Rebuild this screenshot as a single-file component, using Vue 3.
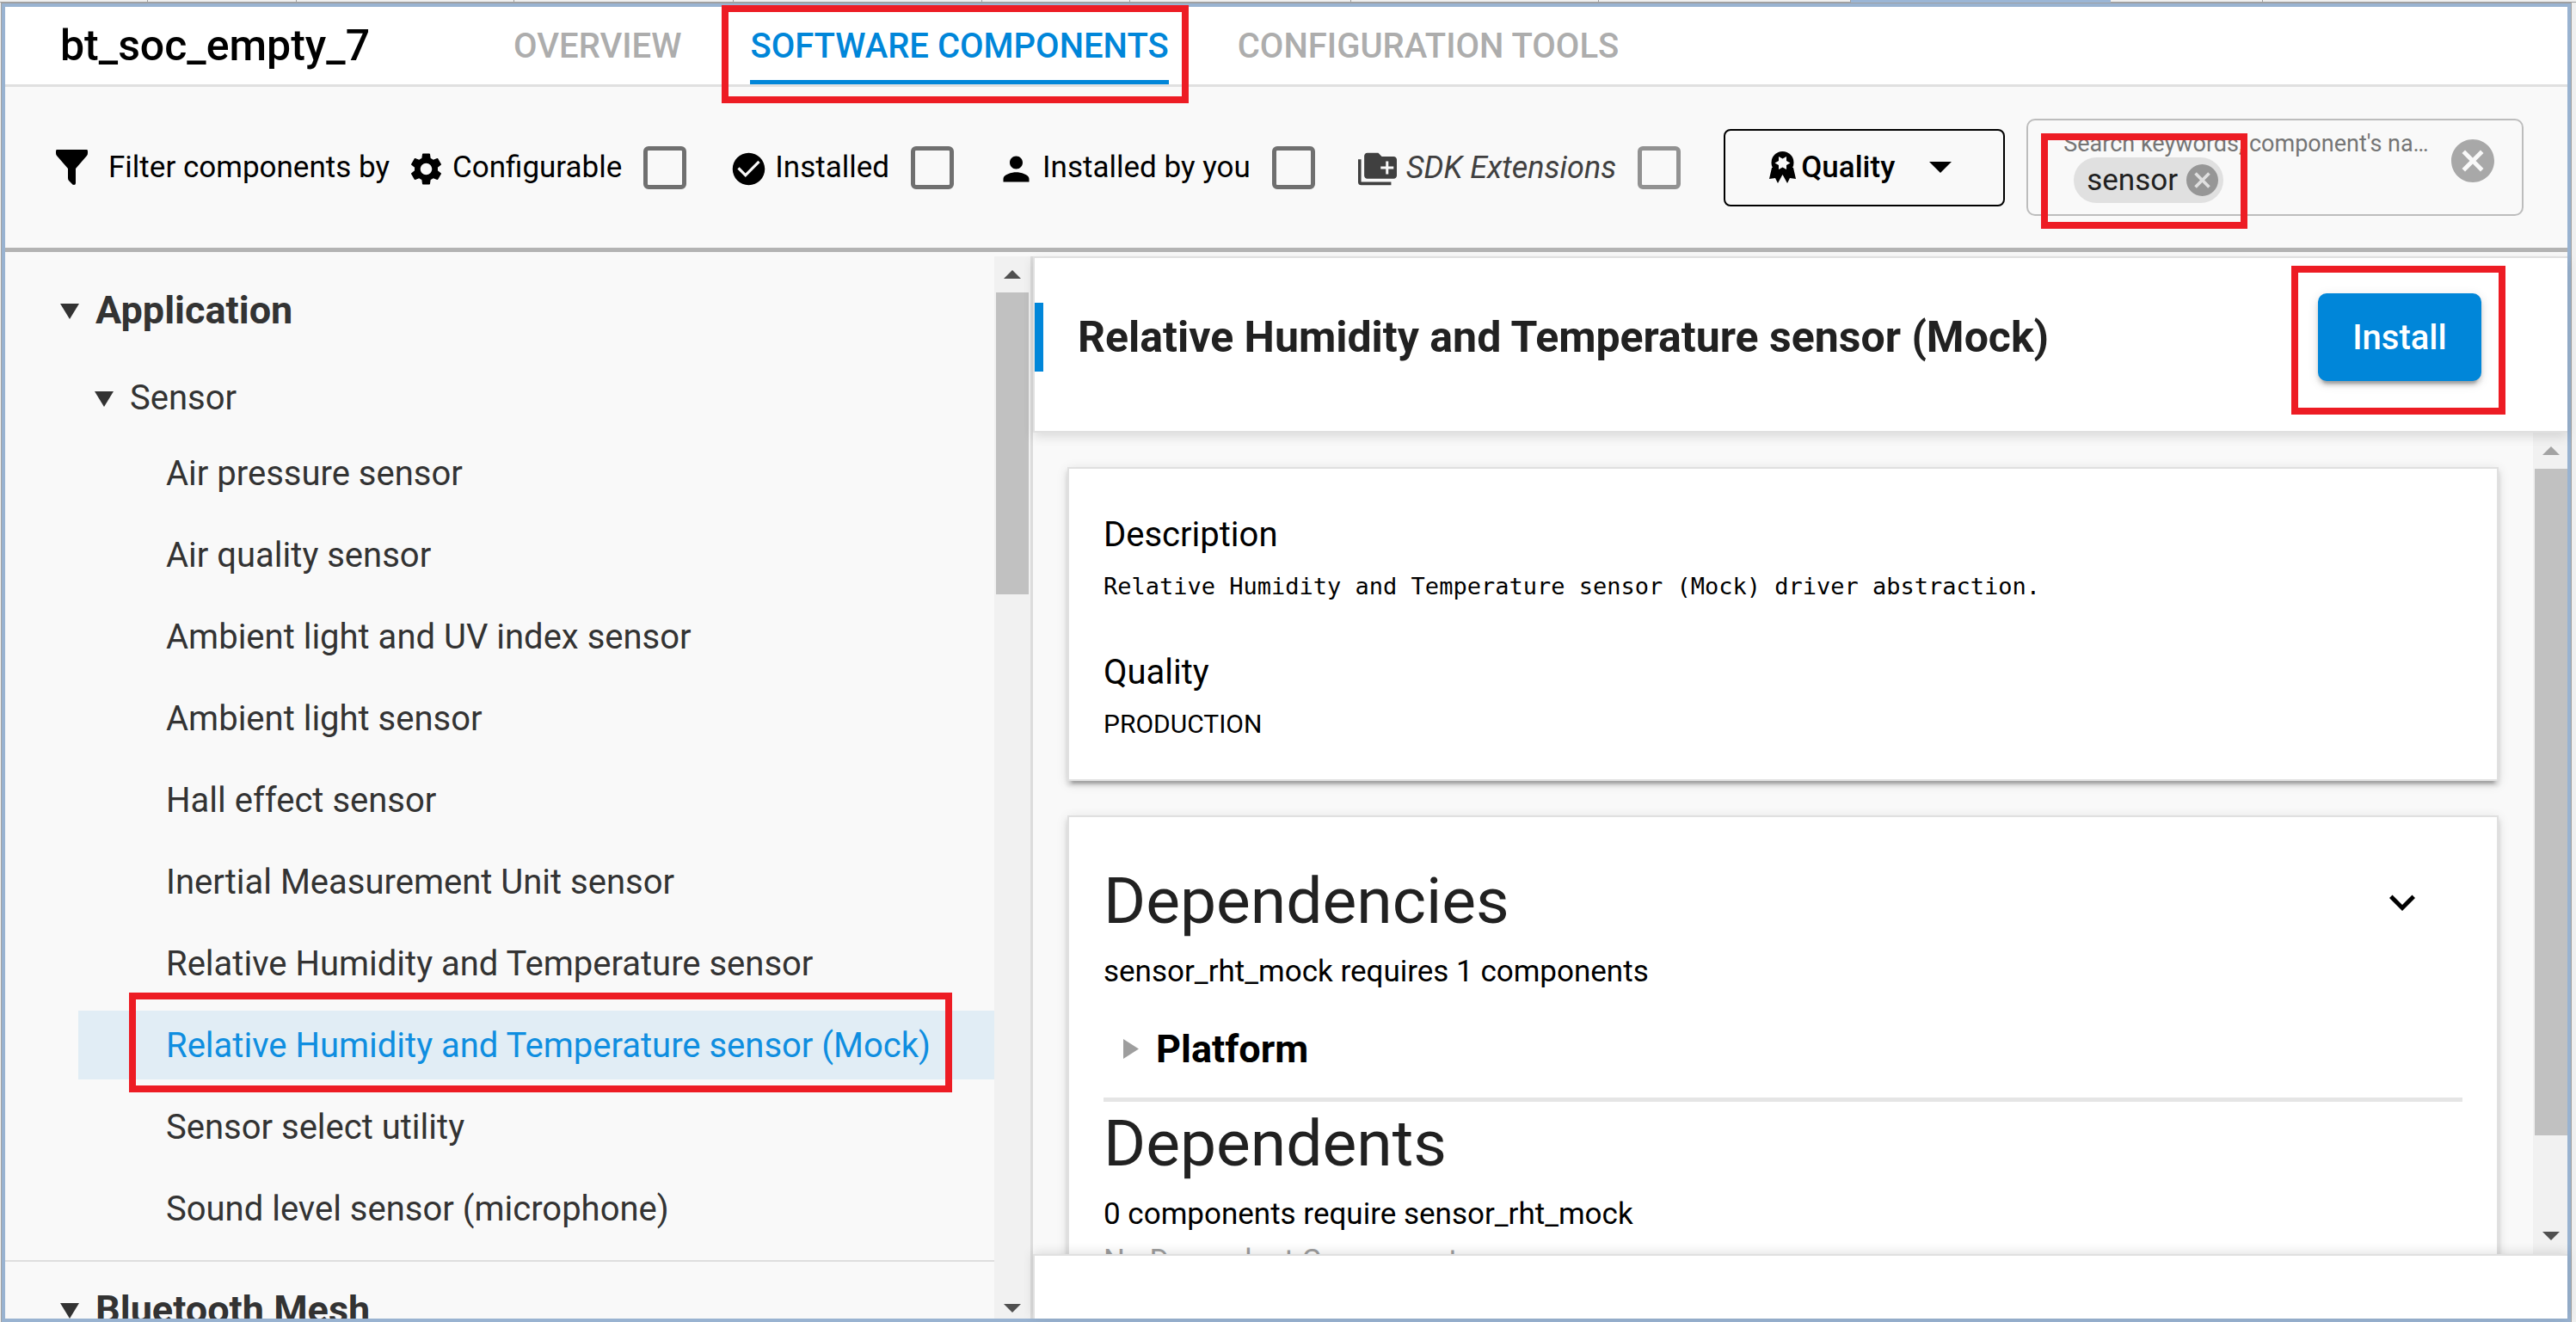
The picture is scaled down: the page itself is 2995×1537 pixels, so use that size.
<script setup>
import { ref } from 'vue'

const editorTabs = [172, 172, 253, 255, 289, 171, 257, 288, 293]

const navItems = ['OVERVIEW', 'SOFTWARE COMPONENTS', 'CONFIGURATION TOOLS']
const activeNav = 'SOFTWARE COMPONENTS'

const filters = [
  { id: 'configurable', label: 'Configurable', icon: 'gear' },
  { id: 'installed', label: 'Installed', icon: 'check' },
  { id: 'by-you', label: 'Installed by you', icon: 'person' },
  { id: 'sdk', label: 'SDK Extensions', icon: 'folder', muted: true }
]

const icons = {
  gear: 'M19.14 12.94c.04-.3.06-.61.06-.94 0-.32-.02-.64-.07-.94l2.03-1.58c.18-.14.23-.41.12-.61l-1.92-3.32c-.12-.22-.37-.29-.59-.22l-2.39.96c-.5-.38-1.03-.7-1.62-.94l-.36-2.54c-.04-.24-.24-.41-.48-.41h-3.84c-.24 0-.43.17-.47.41l-.36 2.54c-.59.24-1.13.57-1.62.94l-2.39-.96c-.22-.08-.47 0-.59.22L2.74 8.87c-.12.21-.08.47.12.61l2.03 1.58c-.05.3-.09.63-.09.94s.02.64.07.94l-2.03 1.58c-.18.14-.23.41-.12.61l1.92 3.32c.12.22.37.29.59.22l2.39-.96c.5.38 1.03.7 1.62.94l.36 2.54c.05.24.24.41.48.41h3.84c.24 0 .44-.17.47-.41l.36-2.54c.59-.24 1.13-.56 1.62-.94l2.39.96c.22.08.47 0 .59-.22l1.92-3.32c.12-.22.07-.47-.12-.61l-2.01-1.58zM12 15.6c-1.98 0-3.6-1.62-3.6-3.6s1.62-3.6 3.6-3.6 3.6 1.62 3.6 3.6-1.62 3.6-3.6 3.6z',
  check: 'M12 2C6.48 2 2 6.48 2 12s4.48 10 10 10 10-4.48 10-10S17.52 2 12 2zm-2 15l-5-5 1.2-1.2L10 14.6l7.8-7.8L19 8l-9 9z',
  person: 'M12 12c2.21 0 4-1.79 4-4s-1.79-4-4-4-4 1.79-4 4 1.79 4 4 4zm0 2c-2.67 0-8 1.34-8 4v2h16v-2c0-2.66-5.33-4-8-4z',
  folder: 'M0 6h1.900v14h18.600v2H1.900C.8 22 0 21.200 0 20.200zM5.700 2h6.800l2.200 2.200h7.300c1.100 0 2 .8 2 1.900v10c0 1-.9 1.900-2 1.900H5.700c-1 0-1.900-.9-1.900-1.900V3.900C3.800 2.900 4.700 2 5.700 2zM17.200 7.200v3.200H14V12h3.200v3.200h1.600V12H22v-1.600h-3.200V7.200z',
  cancel: 'M12 2C6.470 2 2 6.470 2 12s4.470 10 10 10 10-4.470 10-10S17.530 2 12 2zm5 13.590L15.590 17 12 13.410 8.410 17 7 15.590 10.590 12 7 8.410 8.410 7 12 10.590 15.590 7 17 8.410 13.410 12z'
}

const components = [
  'Air pressure sensor',
  'Air quality sensor',
  'Ambient light and UV index sensor',
  'Ambient light sensor',
  'Hall effect sensor',
  'Inertial Measurement Unit sensor',
  'Relative Humidity and Temperature sensor',
  'Relative Humidity and Temperature sensor (Mock)',
  'Sensor select utility',
  'Sound level sensor (microphone)'
]
const selected = ref('Relative Humidity and Temperature sensor (Mock)')
const query = ref('')
</script>

<template>
  <div class="app">
    <div class="editor-tabs" aria-hidden="true">
      <span v-for="(w, i) in editorTabs" :key="i" class="editor-tab" :style="{ flexGrow: w }"></span>
      <span class="editor-tab current"></span>
      <span class="editor-tab after"></span>
      <span class="editor-tab last"></span>
    </div>

    <div class="window">
      <header class="topbar">
        <h1>bt_soc_empty_7</h1>
        <nav>
          <a v-for="item in navItems" :key="item" href="#" :class="{ active: item === activeNav, marked: item === activeNav }">{{ item }}</a>
        </nav>
      </header>

      <section class="filterbar">
        <svg class="funnel" viewBox="0 0 37 41" aria-hidden="true">
          <path d="M1 0h35q1 0 1 2v2q0 2-1 3L23 22v17q0 2-2 2-2 0-3-2l-3-3q-1-1-1-3V22L1 7Q0 6 0 4V2q0-2 1-2z" />
        </svg>
        <span class="filter-title">Filter components by</span>

        <div class="filters">
          <div v-for="f in filters" :key="f.id" class="filter" :class="{ muted: f.muted }">
            <label :for="f.id">
              <svg class="icon" viewBox="0 0 24 24" aria-hidden="true"><path fill-rule="evenodd" :d="icons[f.icon]" /></svg>
              <span>{{ f.label }}</span>
            </label>
            <input :id="f.id" type="checkbox" />
          </div>
        </div>

        <label class="quality">
          <svg class="ribbon" viewBox="0 0 31 37" aria-hidden="true">
            <path d="M3 19L0 32l7-1 3 6 5.500-10L21 37l3-6 7 1-3-13z" />
            <circle cx="15.500" cy="13" r="13" />
            <path class="star" d="M24.500 13.500L20 16l0 5-4.500-2.500L11 21v-5l-4.500-2.500L11 11V6l4.500 2.500L20 6v5z" />
          </svg>
          <select aria-label="Quality">
            <option>Quality</option>
          </select>
          <svg class="caret" viewBox="0 0 26 13" aria-hidden="true"><path d="M0 0h26L13 13z" /></svg>
        </label>

        <div class="search">
          <div class="search-body">
            <label for="search">Search keywords, component's na…</label>
            <div class="chips">
              <span class="chip marked">
                sensor
                <button type="button" aria-label="Remove sensor">
                  <svg viewBox="2 2 20 20"><path :d="icons.cancel" /></svg>
                </button>
              </span>
              <input id="search" v-model="query" type="text" />
            </div>
          </div>
          <button type="button" class="clear" aria-label="Clear search">
            <svg viewBox="2 2 20 20"><path :d="icons.cancel" /></svg>
          </button>
        </div>
      </section>

      <main class="content">
        <aside class="sidebar">
          <div class="tree">
            <section class="group">
              <button type="button" class="group-head">
                <svg class="tri" viewBox="0 0 22 18" aria-hidden="true"><path d="M0 0h22L11 18z" /></svg>Application
              </button>
              <button type="button" class="sub-head">
                <svg class="tri" viewBox="0 0 22 18" aria-hidden="true"><path d="M0 0h22L11 18z" /></svg>Sensor
              </button>
              <ul>
                <li v-for="c in components" :key="c">
                  <button type="button" :class="{ selected: c === selected, marked: c === selected }" @click="selected = c">{{ c }}</button>
                </li>
              </ul>
            </section>
            <section class="group">
              <button type="button" class="group-head">
                <svg class="tri" viewBox="0 0 22 18" aria-hidden="true"><path d="M0 0h22L11 18z" /></svg>Bluetooth Mesh
              </button>
            </section>
          </div>
          <div class="scrollbar tree-scroll" aria-hidden="true">
            <div class="arrow"><svg viewBox="0 0 22 11"><path d="M11 0l11 11H0z" /></svg></div>
            <div class="track"><div class="thumb"></div></div>
            <div class="arrow short"><svg viewBox="0 0 22 11"><path d="M0 0h22L11 11z" /></svg></div>
          </div>
        </aside>

        <section class="detail">
          <header class="detail-head">
            <h2>{{ selected }}</h2>
            <button type="button" class="install marked">Install</button>
          </header>

          <div class="detail-body">
            <div class="cards">
              <article class="card">
                <h3>Description</h3>
                <p class="mono">Relative Humidity and Temperature sensor (Mock) driver abstraction.</p>
                <h3 class="spaced">Quality</h3>
                <p class="small">PRODUCTION</p>
              </article>

              <article class="card deps">
                <div class="deps-head">
                  <h4>Dependencies</h4>
                  <button type="button" aria-label="Collapse">
                    <svg viewBox="0 0 24 24"><path d="M16.590 8.590L12 13.170 7.410 8.590 6 10l6 6 6-6z" /></svg>
                  </button>
                </div>
                <p>sensor_rht_mock requires 1 components</p>
                <button type="button" class="platform">
                  <svg viewBox="0 0 18 23" aria-hidden="true"><path d="M0 0l18 11.500L0 23z" /></svg>Platform
                </button>
                <hr />
                <h4>Dependents</h4>
                <p>0 components require sensor_rht_mock</p>
                <p class="none">No Dependent Components</p>
              </article>
            </div>
            <div class="scrollbar detail-scroll" aria-hidden="true">
              <div class="arrow off"><svg viewBox="0 0 22 11"><path d="M11 0l11 11H0z" /></svg></div>
              <div class="track"><div class="thumb"></div></div>
              <div class="arrow"><svg viewBox="0 0 22 11"><path d="M0 0h22L11 11z" /></svg></div>
            </div>
          </div>

          <footer class="detail-foot"></footer>
        </section>
      </main>
    </div>
  </div>
</template>

<style>
html,
body {
  margin: 0;
  overflow: hidden;
}
</style>

<style scoped>
* {
  box-sizing: border-box;
}
.app {
  display: flex;
  flex-direction: column;
  height: 100vh;
  background: #f0f0f0;
  color: #000;
  font-family: Roboto, sans-serif;
  font-size: 35px;
}
h1, h2, h3, h4, p, ul {
  margin: 0;
  padding: 0;
  font-weight: 400;
}
button, input, select {
  margin: 0;
  padding: 0;
  border: 0;
  background: none;
  color: inherit;
  font: inherit;
}
svg {
  display: block;
  flex: none;
  fill: currentColor;
}

/* Strip of editor tabs peeking in above the window */
.editor-tabs {
  display: flex;
  height: 4px;
}
.editor-tab {
  flex: 1 1 0;
  height: 3px;
  border-right: 1px solid #a0a0a0;
  border-bottom: 1px solid #a0a0a0;
}
.editor-tab.current {
  flex-grow: 303;
  height: 4px;
  border: 0;
  background: #9bb6d6;
}
.editor-tab.after {
  flex-grow: 177;
}
.editor-tab.last {
  flex-grow: 365;
  border-right: 0;
}

.window {
  display: flex;
  flex: 1;
  flex-direction: column;
  min-height: 0;
  margin: 0 6px 0 2px;
  border: 4px solid #99b3d1;
  background: #f9f9f9;
  box-shadow: 0 0 0 1px #a0a0a0;
}

/* Red call-out frames */
.marked {
  position: relative;
}
.marked::after {
  position: absolute;
  z-index: 5;
  border: 8px solid #ed1c24;
  content: '';
  pointer-events: none;
}

.topbar {
  display: flex;
  flex: none;
  align-items: stretch;
  height: 93px;
  padding-left: 64px;
  border-bottom: 3px solid #e0e0e0;
  background: #fff;
}
h1 {
  font-size: 50px;
  font-weight: 500;
  line-height: 90px;
}
nav {
  display: flex;
  gap: 80px;
  margin-left: 167px;
}
nav a {
  height: 90px;
  color: #adadad;
  font-size: 40px;
  font-weight: 500;
  line-height: 92px;
  text-decoration: none;
}
nav a.active {
  color: #0086d9;
  box-shadow: inset 0 -5px #0086d9;
}
nav a.marked::after {
  inset: -2px -23px -22px -33px;
}

.filterbar {
  display: flex;
  flex: none;
  align-items: center;
  height: 192px;
  padding: 0 51px 0 59px;
  border-bottom: 5px solid #b3b3b3;
}
.funnel {
  width: 37px;
  height: 41px;
}
.filter-title {
  margin: 0 20px 0 24px;
  white-space: nowrap;
}
.filters {
  display: flex;
  gap: 50px;
}
.filter,
.filter label {
  display: flex;
  align-items: center;
  white-space: nowrap;
}
.filter {
  gap: 25px;
}
.filter label {
  gap: 8px;
}
.icon {
  width: 45px;
  height: 45px;
  margin-top: 4px;
}
.filter input {
  width: 50px;
  height: 50px;
  border: 5px solid #707070;
  border-radius: 6px;
  appearance: none;
}
.filter.muted label {
  gap: 11px;
  color: #404040;
  font-size: 36px;
  font-style: italic;
}
.muted input {
  border-color: #929292;
}

.quality {
  display: flex;
  flex: none;
  align-items: center;
  width: 327px;
  height: 90px;
  margin: 0 25px 0 50px;
  padding: 0 60px 0 51px;
  border: 2px solid #000;
  border-radius: 8px;
}
.ribbon {
  width: 31px;
  height: 37px;
}
.star {
  fill: #f9f9f9;
}
.quality select {
  flex: 1;
  min-width: 0;
  margin-left: 6px;
  font-weight: 500;
  appearance: none;
}
.caret {
  width: 26px;
  height: 13px;
}

.search {
  display: flex;
  flex: 1;
  align-items: center;
  min-width: 0;
  height: 113px;
  padding: 0 32px 0 41px;
  border: 2px solid #bdbdbd;
  border-radius: 10px;
}
.search-body {
  flex: 1;
  min-width: 0;
}
.search-body label {
  display: block;
  margin-bottom: 2px;
  color: #757575;
  font-size: 27px;
  line-height: 28px;
  white-space: nowrap;
}
.chips {
  display: flex;
  padding-left: 12px;
}
.chips input {
  flex: 1;
  min-width: 0;
  outline: 0;
}
.chip {
  display: flex;
  gap: 10px;
  align-items: center;
  height: 53px;
  padding: 0 6px 0 15px;
  border-radius: 27px;
  background: #e0e0e0;
  color: #212121;
}
.chip button,
.chip svg {
  width: 37px;
  height: 37px;
  color: #969696;
}
.chip.marked::after {
  inset: -28px -28px -30px -38px;
}
.clear,
.clear svg {
  width: 50px;
  height: 50px;
  color: #a8a8a8;
}
.clear {
  margin-bottom: 15px;
}

.content {
  display: grid;
  flex: 1;
  grid-template-columns: minmax(0, 1195fr) minmax(0, 1784fr);
  min-height: 0;
  padding-top: 5px;
}

.sidebar {
  display: flex;
  min-height: 0;
  border-right: 3px solid #dcdcdc;
  color: #333;
}
.tree {
  flex: 1;
  min-width: 0;
  padding-top: 7px;
  overflow: hidden;
}
.group {
  padding-bottom: 20px;
  border-bottom: 2px solid #dedede;
}
.group-head,
.sub-head {
  display: flex;
  gap: 19px;
  align-items: center;
  width: 100%;
}
.group-head {
  height: 110px;
  padding-left: 64px;
  font-size: 45px;
  font-weight: 700;
}
.sub-head {
  height: 80px;
  margin-top: 7px;
  padding-left: 104px;
  font-size: 40px;
}
.tri {
  width: 22px;
  height: 18px;
  margin-top: 4px;
}
.tree ul {
  display: flex;
  flex-direction: column;
  gap: 15px;
  margin-top: 8px;
  padding-left: 85px;
  list-style: none;
}
.tree li button {
  display: block;
  width: 100%;
  height: 80px;
  padding: 2px 0 0 102px;
  font-size: 40px;
  line-height: 78px;
  text-align: left;
  white-space: nowrap;
}
.tree li .selected {
  background: #e1edf5;
  color: #0f8ee0;
}
.tree li .marked::after {
  inset: -21px 49px -15px 59px;
}

.scrollbar {
  display: flex;
  flex: none;
  flex-direction: column;
  background: #f1f1f1;
}
.arrow {
  display: flex;
  flex: none;
  align-items: center;
  justify-content: center;
  height: 42px;
  color: #505050;
}
.arrow.short {
  height: 24px;
}
.arrow.off {
  color: #a3a3a3;
}
.arrow svg {
  width: 20px;
  height: 10px;
}
.track {
  flex: 1;
}
.thumb {
  background: #c1c1c1;
}
.tree-scroll {
  width: 42px;
  padding: 0 2px;
}
.tree-scroll .thumb {
  height: 30%;
}
.detail-scroll {
  width: 40px;
  padding-left: 2px;
}
.detail-scroll .thumb {
  height: 89%;
}

.detail {
  display: flex;
  flex-direction: column;
  min-height: 0;
}
.detail-head {
  position: relative;
  z-index: 2;
  display: flex;
  flex: none;
  align-items: center;
  height: 205px;
  padding: 0 100px 17px 0;
  border: 2px solid #e0e0e0;
  border-right: 0;
  background: #fff;
  box-shadow: 0 5px 12px rgba(0, 0, 0, 0.12);
}
h2 {
  flex: 1;
  padding-left: 40px;
  border-left: 10px solid #0086d9;
  color: #212121;
  font-size: 50px;
  font-weight: 700;
  line-height: 80px;
  white-space: nowrap;
}
.install {
  width: 190px;
  height: 102px;
  border-radius: 10px;
  background: #0086d9;
  box-shadow: 0 8px 3px -5px rgba(0, 0, 0, 0.2), 0 5px 5px rgba(0, 0, 0, 0.14), 0 3px 13px rgba(0, 0, 0, 0.12);
  color: #fff;
  font-size: 40px;
  font-weight: 500;
}
.install.marked::after {
  inset: -32px -28px -39px -31px;
}

.detail-body {
  display: flex;
  flex: 1;
  min-height: 0;
}
.cards {
  display: flex;
  flex: 1;
  flex-direction: column;
  gap: 40px;
  min-width: 0;
  padding: 40px;
  overflow: hidden;
}
.card {
  flex: none;
  padding: 41px 40px 40px;
  border: 2px solid #e0e0e0;
  background: #fff;
  box-shadow: 0 8px 3px -5px rgba(0, 0, 0, 0.2), 0 5px 5px rgba(0, 0, 0, 0.14), 0 3px 13px rgba(0, 0, 0, 0.12);
}
h3 {
  font-size: 40px;
  line-height: 72px;
}
h3.spaced {
  margin-top: 40px;
}
.mono {
  font-family: "DejaVu Sans Mono", monospace;
  font-size: 27px;
  line-height: 48px;
}
.small {
  font-size: 30px;
  line-height: 48px;
}
.deps p {
  line-height: 54px;
}
.deps-head {
  display: flex;
  align-items: center;
  justify-content: space-between;
  padding: 8px 40px 0 0;
}
.deps-head button {
  margin-bottom: 5px;
}
h4 {
  margin-bottom: 8px;
  color: #212121;
  font-size: 75px;
  line-height: 96px;
}
.deps-head svg {
  width: 60px;
  height: 60px;
}
.platform {
  display: flex;
  gap: 20px;
  align-items: center;
  height: 60px;
  margin: 32px 0 27px;
  padding-left: 23px;
  font-size: 45px;
  font-weight: 700;
}
.platform svg {
  width: 18px;
  height: 23px;
  color: #9e9e9e;
}
hr {
  height: 5px;
  margin: 0;
  border: 0;
  background: #e5e5e5;
}
.deps .none {
  color: #9e9e9e;
}

.detail-foot {
  position: relative;
  z-index: 2;
  flex: none;
  height: 75px;
  border-top: 2px solid #e0e0e0;
  border-left: 2px solid #e0e0e0;
  background: #fff;
  box-shadow: 0 -2px 12px rgba(0, 0, 0, 0.12);
}
</style>
